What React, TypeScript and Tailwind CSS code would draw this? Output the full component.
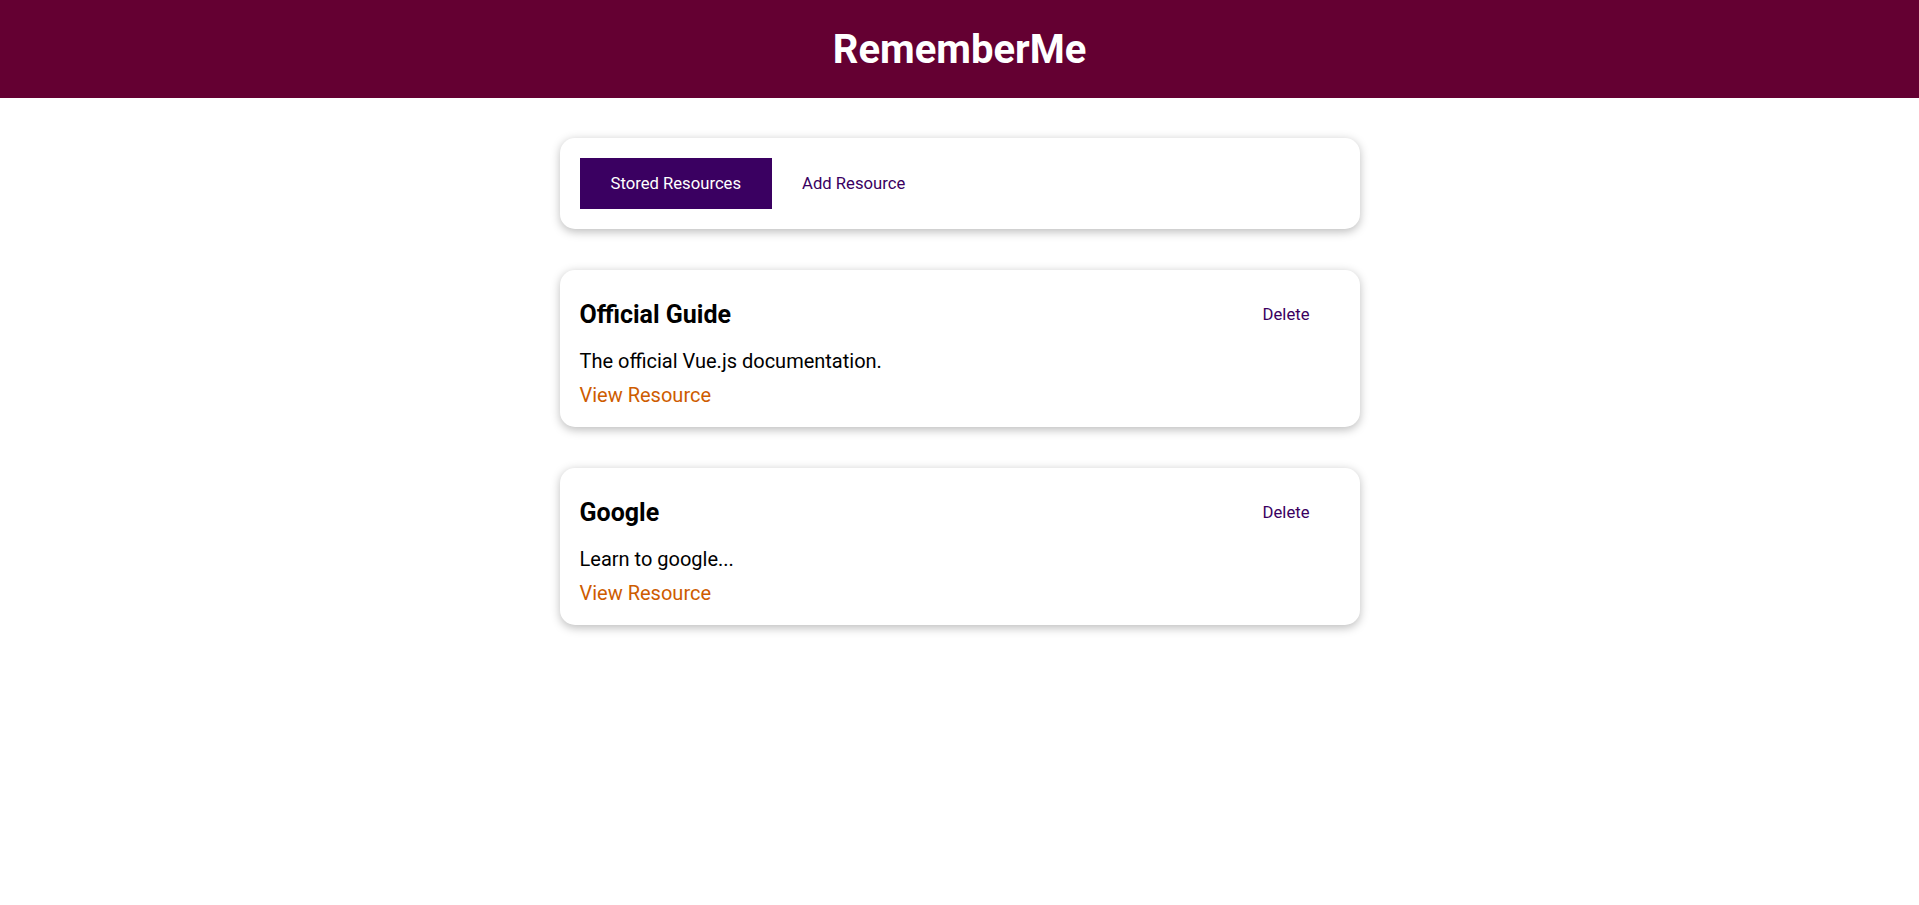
import React, { useState } from "react";

interface Resource {
  id: string;
  title: string;
  description: string;
  link: string;
}

const startResources: Resource[] = [
  {
    id: "official-guide",
    title: "Official Guide",
    description: "The official Vue.js documentation.",
    link: "https://vuejs.org",
  },
  {
    id: "google",
    title: "Google",
    description: "Learn to google...",
    link: "https://google.org",
  },
];

const BaseCard: React.FC<{ children: React.ReactNode; className?: string }> = ({
  children,
  className,
}) => {
  return (
    <div
      className={
        "mx-auto max-w-[800px] rounded-[15px] bg-white p-[20px] shadow-[0_2.5px_10px_rgba(0,0,0,0.26)] " +
        (className ?? "my-[40px]")
      }
    >
      {children}
    </div>
  );
};

const BaseButton: React.FC<{
  flat?: boolean;
  onClick?: () => void;
  children: React.ReactNode;
}> = ({ flat, onClick, children }) => {
  return (
    <button
      onClick={onClick}
      className={
        flat
          ? "cursor-pointer border-0 bg-transparent px-[30px] py-[15px] text-[16.67px] leading-[normal] text-[#3a0061]"
          : "cursor-pointer border border-[#3a0061] bg-[#3a0061] px-[30px] py-[15px] text-[16.67px] leading-[normal] text-white"
      }
    >
      {children}
    </button>
  );
};

export default function App() {
  const [resources, setResources] = useState<Resource[]>(startResources);
  const [tab, setTab] = useState<"stored" | "add">("stored");

  const removeResource = (id: string) => {
    setResources(resources.filter((r) => r.id !== id));
  };

  return (
    <div
      className="min-h-screen bg-white text-[20px] leading-[normal] text-black"
      style={{ fontFamily: "Roboto, 'Noto Sans', sans-serif" }}
    >
      <header className="flex h-[98px] w-full items-center justify-center bg-[#640032]">
        <h1 className="m-0 text-[40px] font-bold text-white">RememberMe</h1>
      </header>

      <BaseCard>
        <div className="flex">
          <BaseButton flat={tab !== "stored"} onClick={() => setTab("stored")}>
            Stored Resources
          </BaseButton>
          <BaseButton flat={tab !== "add"} onClick={() => setTab("add")}>
            Add Resource
          </BaseButton>
        </div>
      </BaseCard>

      {tab === "stored" && (
        <ul className="m-0 mx-auto max-w-[800px] list-none p-0">
          {resources.map((res) => (
            <li key={res.id}>
              <BaseCard className="my-[41px]">
                <header className="flex items-center justify-between">
                  <h3 className="my-[10px] text-[25px] font-bold">{res.title}</h3>
                  <BaseButton flat onClick={() => removeResource(res.id)}>
                    Delete
                  </BaseButton>
                </header>
                <p className="my-[10px]">{res.description}</p>
                <nav>
                  <a href={res.link} className="text-[#ce5c00] no-underline">
                    View Resource
                  </a>
                </nav>
              </BaseCard>
            </li>
          ))}
        </ul>
      )}
    </div>
  );
}
